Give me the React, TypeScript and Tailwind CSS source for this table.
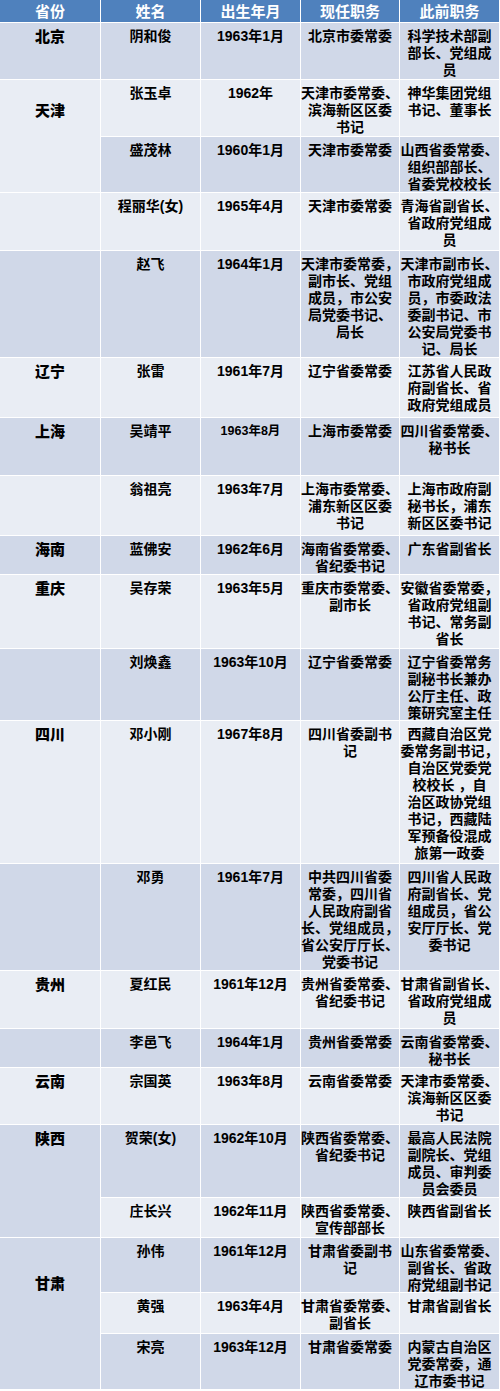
const DARK = "bg-[#d0d8e8]";
const LIGHT = "bg-[#e9edf4]";

type Province = { name: string; span?: 1 | 2 | 3; pad?: string };

type Row = {
  province?: Province | null; // null = covered by a span above
  name: string;
  born: string;
  bornSmall?: boolean;
  now: string[];
  before: string[];
};

const rows: Row[] = [
  { province: { name: "北京" }, name: "阴和俊", born: "1963年1月", now: ["北京市委常委"], before: ["科学技术部副", "部长、党组成", "员"] },
  { province: { name: "天津", span: 2, pad: "pt-[22px]" }, name: "张玉卓", born: "1962年", now: ["天津市委常委、", "滨海新区区委", "书记"], before: ["神华集团党组", "书记、董事长"] },
  { province: null, name: "盛茂林", born: "1960年1月", now: ["天津市委常委"], before: ["山西省委常委、", "组织部部长、", "省委党校校长"] },
  { province: { name: "" }, name: "程丽华(女)", born: "1965年4月", now: ["天津市委常委"], before: ["青海省副省长、", "省政府党组成", "员"] },
  { province: { name: "" }, name: "赵飞", born: "1964年1月", now: ["天津市委常委，", "副市长、党组", "成员，市公安", "局党委书记、", "局长"], before: ["天津市副市长、", "市政府党组成", "员，市委政法", "委副书记、市", "公安局党委书", "记、局长"] },
  { province: { name: "辽宁" }, name: "张雷", born: "1961年7月", now: ["辽宁省委常委"], before: ["江苏省人民政", "府副省长、省", "政府党组成员"] },
  { province: { name: "上海" }, name: "吴靖平", born: "1963年8月", bornSmall: true, now: ["上海市委常委"], before: ["四川省委常委、", "秘书长"] },
  { province: { name: "" }, name: "翁祖亮", born: "1963年7月", now: ["上海市委常委、", "浦东新区区委", "书记"], before: ["上海市政府副", "秘书长，浦东", "新区区委书记"] },
  { province: { name: "海南" }, name: "蓝佛安", born: "1962年6月", now: ["海南省委常委、", "省纪委书记"], before: ["广东省副省长"] },
  { province: { name: "重庆" }, name: "吴存荣", born: "1963年5月", now: ["重庆市委常委、", "副市长"], before: ["安徽省委常委，", "省政府党组副", "书记、常务副", "省长"] },
  { province: { name: "" }, name: "刘焕鑫", born: "1963年10月", now: ["辽宁省委常委"], before: ["辽宁省委常务", "副秘书长兼办", "公厅主任、政", "策研究室主任"] },
  { province: { name: "四川" }, name: "邓小刚", born: "1967年8月", now: ["四川省委副书", "记"], before: ["西藏自治区党", "委常务副书记，", "自治区党委党", "校校长 ，自", "治区政协党组", "书记，西藏陆", "军预备役混成", "旅第一政委"] },
  { province: { name: "" }, name: "邓勇", born: "1961年7月", now: ["中共四川省委", "常委，四川省", "人民政府副省", "长、党组成员，", "省公安厅厅长、", "党委书记"], before: ["四川省人民政", "府副省长、党", "组成员，省公", "安厅厅长、党", "委书记"] },
  { province: { name: "贵州" }, name: "夏红民", born: "1961年12月", now: ["贵州省委常委、", "省纪委书记"], before: ["甘肃省副省长、", "省政府党组成", "员"] },
  { province: { name: "" }, name: "李邑飞", born: "1964年1月", now: ["贵州省委常委"], before: ["云南省委常委、", "秘书长"] },
  { province: { name: "云南" }, name: "宗国英", born: "1963年8月", now: ["云南省委常委"], before: ["天津市委常委、", "滨海新区区委", "书记"] },
  { province: { name: "陕西", span: 2 }, name: "贺荣(女)", born: "1962年10月", now: ["陕西省委常委、", "省纪委书记"], before: ["最高人民法院", "副院长、党组", "成员、审判委", "员会委员"] },
  { province: null, name: "庄长兴", born: "1962年11月", now: ["陕西省委常委、", "宣传部部长"], before: ["陕西省副省长"] },
  { province: { name: "甘肃", span: 3, pad: "pt-[37px]" }, name: "孙伟", born: "1961年12月", now: ["甘肃省委副书", "记"], before: ["山东省委常委、", "副省长、省政", "府党组副书记"] },
  { province: null, name: "黄强", born: "1963年4月", now: ["甘肃省委常委、", "副省长"], before: ["甘肃省副省长"] },
  { province: null, name: "宋亮", born: "1963年12月", now: ["甘肃省委常委"], before: ["内蒙古自治区", "党委常委，通", "辽市委书记"] },
];

const headers = ["省份", "姓名", "出生年月", "现任职务", "此前职务"];

function Lines({ lines }: { lines: string[] }) {
  return (
    <>
      {lines.map((l, i) => (
        <div key={i} className="whitespace-nowrap">
          {l}
        </div>
      ))}
    </>
  );
}

export default function App() {
  return (
    <div className="h-[1391px] w-[500px] bg-white font-['Liberation_Sans','Noto_Sans_CJK_SC',sans-serif] text-[14px] font-bold leading-[17px] text-black">
      <div className="grid grid-cols-[100px_99px_99px_98px_99px] grid-rows-[22px_56px_56px_55px_57px_106px_59px_57px_59px_38px_73px_71px_142px_106px_57px_38px_56px_72px_39px_54px_40px_55px] gap-px bg-white">
        {headers.map((h) => (
          <div key={h} className="flex items-center justify-center bg-[#4f81bd] text-[15px] text-white">
            {h}
          </div>
        ))}

        {rows.map((r, i) => {
          const bg = i % 2 === 0 ? DARK : LIGHT;
          const p = r.province;
          return [
            p ? (
              <div
                key={`p${i}`}
                className={`${bg} ${p.span === 2 ? "row-span-2" : p.span === 3 ? "row-span-3" : ""} ${p.pad ?? "pt-[5px]"} text-center text-[15px] font-black`}
              >
                {p.name}
              </div>
            ) : null,
            <div key={`n${i}`} className={`${bg} col-start-2 pt-[5px] text-center`}>
              {r.name}
            </div>,
            <div key={`b${i}`} className={`${bg} pt-[5px] text-center ${r.bornSmall ? "text-[12.5px]" : ""}`}>
              {r.born}
            </div>,
            <div key={`c${i}`} className={`${bg} pt-[5px] text-center`}>
              <Lines lines={r.now} />
            </div>,
            <div key={`d${i}`} className={`${bg} pt-[5px] text-center`}>
              <Lines lines={r.before} />
            </div>,
          ];
        })}
      </div>
    </div>
  );
}
